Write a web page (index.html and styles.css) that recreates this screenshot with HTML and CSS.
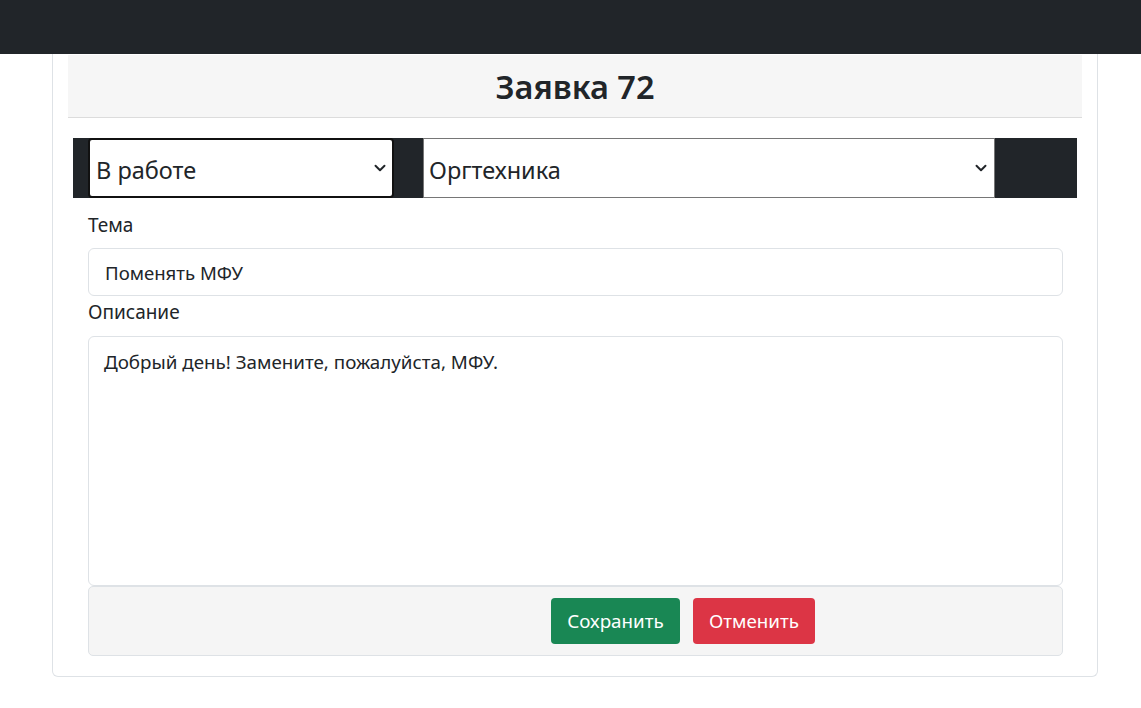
FILE: index.html
```html
<!DOCTYPE html>
<html lang="ru">
<head>
<meta charset="utf-8">
<title>Заявка 72</title>
<link rel="stylesheet" href="styles.css">
</head>
<body>
<nav class="navbar"></nav>
<main class="page">
  <section class="card">
    <header class="card-header">
      <h2 class="title">Заявка 72</h2>
    </header>
    <div class="card-body">
      <div class="select-row">
        <div class="select status-select">
          <span>В работе</span>
          <svg class="chev" viewBox="0 0 16 16" width="12" height="12"><path d="M2 5l6 6 6-6" fill="none" stroke="#212529" stroke-width="2.6" stroke-linecap="round" stroke-linejoin="round"/></svg>
        </div>
        <div class="select cat-select">
          <span>Оргтехника</span>
          <svg class="chev" viewBox="0 0 16 16" width="12" height="12"><path d="M2 5l6 6 6-6" fill="none" stroke="#212529" stroke-width="2.6" stroke-linecap="round" stroke-linejoin="round"/></svg>
        </div>
      </div>
      <div class="form">
        <label class="label label-first">Тема</label>
        <div class="input">Поменять МФУ</div>
        <label class="label label-second">Описание</label>
        <div class="textarea">Добрый день! Замените, пожалуйста, МФУ.</div>
        <div class="actions">
          <button class="btn btn-save">Сохранить</button>
          <button class="btn btn-cancel">Отменить</button>
        </div>
      </div>
    </div>
  </section>
</main>
</body>
</html>
```
FILE: styles.css
```css
* { box-sizing: border-box; }
html, body { margin: 0; padding: 0; }
body {
  font-family: "Noto Sans", "Open Sans", sans-serif;
  color: #212529;
  background: #fff;
  width: 1141px;
  height: 708px;
  overflow: hidden;
}
.navbar {
  height: 54px;
  background: #212529;
}
.page {
  padding: 0 44px 0 52px;
}
.card {
  width: 1046px;
  border: 1px solid #dee2e6;
  border-top: none;
  border-radius: 0 0 6px 6px;
  padding: 1px 15px 20px 15px;
}
.card-header {
  background: #f6f6f6;
  border-bottom: 1px solid #dcdcdc;
  height: 63px;
  display: flex;
  align-items: center;
  justify-content: center;
}
.title {
  margin: 0;
  font-size: 32.5px;
  font-weight: 600;
  line-height: 1;
  padding-top: 2px;
}
.card-body {
  padding: 20px 5px 0 5px;
}
.select-row {
  background: #212529;
  height: 60px;
  display: flex;
  padding-left: 15px;
}
.select {
  background: #fff;
  height: 60px;
  display: flex;
  align-items: center;
  justify-content: space-between;
  font-size: 23.5px;
  color: #212529;
  padding-top: 3px;
}
.status-select {
  width: 306px;
  border: 2px solid #111;
  border-radius: 4px;
  padding-left: 6px;
  padding-right: 6px;
}
.cat-select {
  width: 572px;
  margin-left: 29px;
  border: 1px solid #767676;
  padding-left: 5px;
  padding-right: 7px;
}
.chev { margin-top: -4px; }
.form {
  padding: 0 14px 0 15px;
  display: flex;
  flex-direction: column;
}
.label {
  font-size: 19px;
  line-height: 26px;
}
.label-first { margin-top: 14px; margin-bottom: 10px; }
.label-second { margin-top: 3px; margin-bottom: 11px; }
.input {
  height: 48px;
  border: 1px solid #dee2e6;
  border-radius: 6px;
  padding: 0 16px;
  display: flex;
  align-items: center;
  font-size: 18.6px;
}
.textarea {
  height: 250px;
  border: 1px solid #dee2e6;
  border-radius: 6px;
  padding: 12px 15px;
  font-size: 18.8px;
  line-height: 26px;
}
.actions {
  height: 70px;
  background: #f5f5f5;
  border: 1px solid #dee2e6;
  border-radius: 5px;
  display: flex;
  align-items: center;
  gap: 13px;
  padding-left: 462px;
}
.btn {
  font-family: inherit;
  font-size: 18.8px;
  color: #fff;
  border: none;
  border-radius: 4px;
  height: 46px;
  padding: 0;
}
.btn-save { background: #198754; width: 129px; }
.btn-cancel { background: #dc3545; width: 122px; }
```
